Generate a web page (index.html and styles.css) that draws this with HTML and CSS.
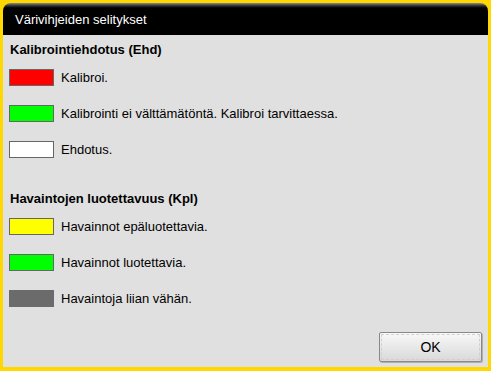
FILE: index.html
```html
<!DOCTYPE html>
<html lang="fi">
<head>
<meta charset="utf-8">
<title>Värivihjeiden selitykset</title>
<link rel="stylesheet" href="styles.css">
</head>
<body>
<div class="dialog">
  <div class="titlebar">Värivihjeiden selitykset</div>
  <div class="content">
    <div class="section">
      <div class="heading">Kalibrointiehdotus (Ehd)</div>
      <div class="row"><span class="swatch red"></span><span class="label">Kalibroi.</span></div>
      <div class="row"><span class="swatch green"></span><span class="label">Kalibrointi ei välttämätöntä. Kalibroi tarvittaessa.</span></div>
      <div class="row"><span class="swatch white"></span><span class="label">Ehdotus.</span></div>
    </div>
    <div class="section second">
      <div class="heading">Havaintojen luotettavuus (Kpl)</div>
      <div class="row"><span class="swatch yellow"></span><span class="label">Havainnot epäluotettavia.</span></div>
      <div class="row"><span class="swatch green"></span><span class="label">Havainnot luotettavia.</span></div>
      <div class="row"><span class="swatch gray"></span><span class="label">Havaintoja liian vähän.</span></div>
    </div>
    <div class="footer">
      <button class="ok">OK</button>
    </div>
  </div>
</div>
</body>
</html>
```
FILE: styles.css
```css
html, body {
  margin: 0;
  padding: 0;
}
body {
  background: #ffd800;
  width: 491px;
  height: 371px;
  font-family: "Liberation Sans", Arial, sans-serif;
  color: #000;
}
.dialog {
  margin: 3px 3px 4px 3px;
  height: 364px;
  display: flex;
  flex-direction: column;
}
.titlebar {
  height: 32px;
  box-sizing: border-box;
  border-radius: 8px 8px 0 0;
  background: linear-gradient(#8a8a8a 0px, #2a2a2a 3px, #000 5px);
  color: #fff;
  font-size: 13px;
  line-height: 30px;
  padding-left: 12px;
  padding-top: 2px;
}
.content {
  flex: 1;
  background: #e0e0e0;
  display: flex;
  flex-direction: column;
  padding: 7px 6px 5px 6px;
}
.section {
  display: flex;
  flex-direction: column;
  gap: 19px;
}
.section.second {
  margin-top: 33px;
}
.heading {
  font-weight: bold;
  font-size: 13px;
  line-height: 16px;
  padding-left: 1px;
  margin-bottom: -8px;
}
.row {
  display: flex;
  align-items: center;
  height: 17px;
  font-size: 13px;
}
.swatch {
  width: 45px;
  height: 17px;
  box-sizing: border-box;
  border: 1px solid #666;
  margin-right: 7px;
}
.red { background: #ff0000; }
.green { background: #00ff00; }
.white { background: #ffffff; }
.yellow { background: #ffff00; }
.gray { background: #6b6b6b; border-color: #6b6b6b; }
.footer {
  margin-top: auto;
  display: flex;
  justify-content: flex-end;
}
.ok {
  width: 103px;
  height: 30px;
  border: 1px solid #888;
  border-radius: 2px;
  background: linear-gradient(#f9f9f9, #e8e8e8 50%, #d9d9d9);
  outline: 1px dashed #d0d0d0;
  outline-offset: -3px;
  font-family: "Liberation Sans", Arial, sans-serif;
  font-size: 14px;
  color: #000;
  padding: 0;
  box-shadow: 1px 1px 0 #b0b0b0;
}
```
